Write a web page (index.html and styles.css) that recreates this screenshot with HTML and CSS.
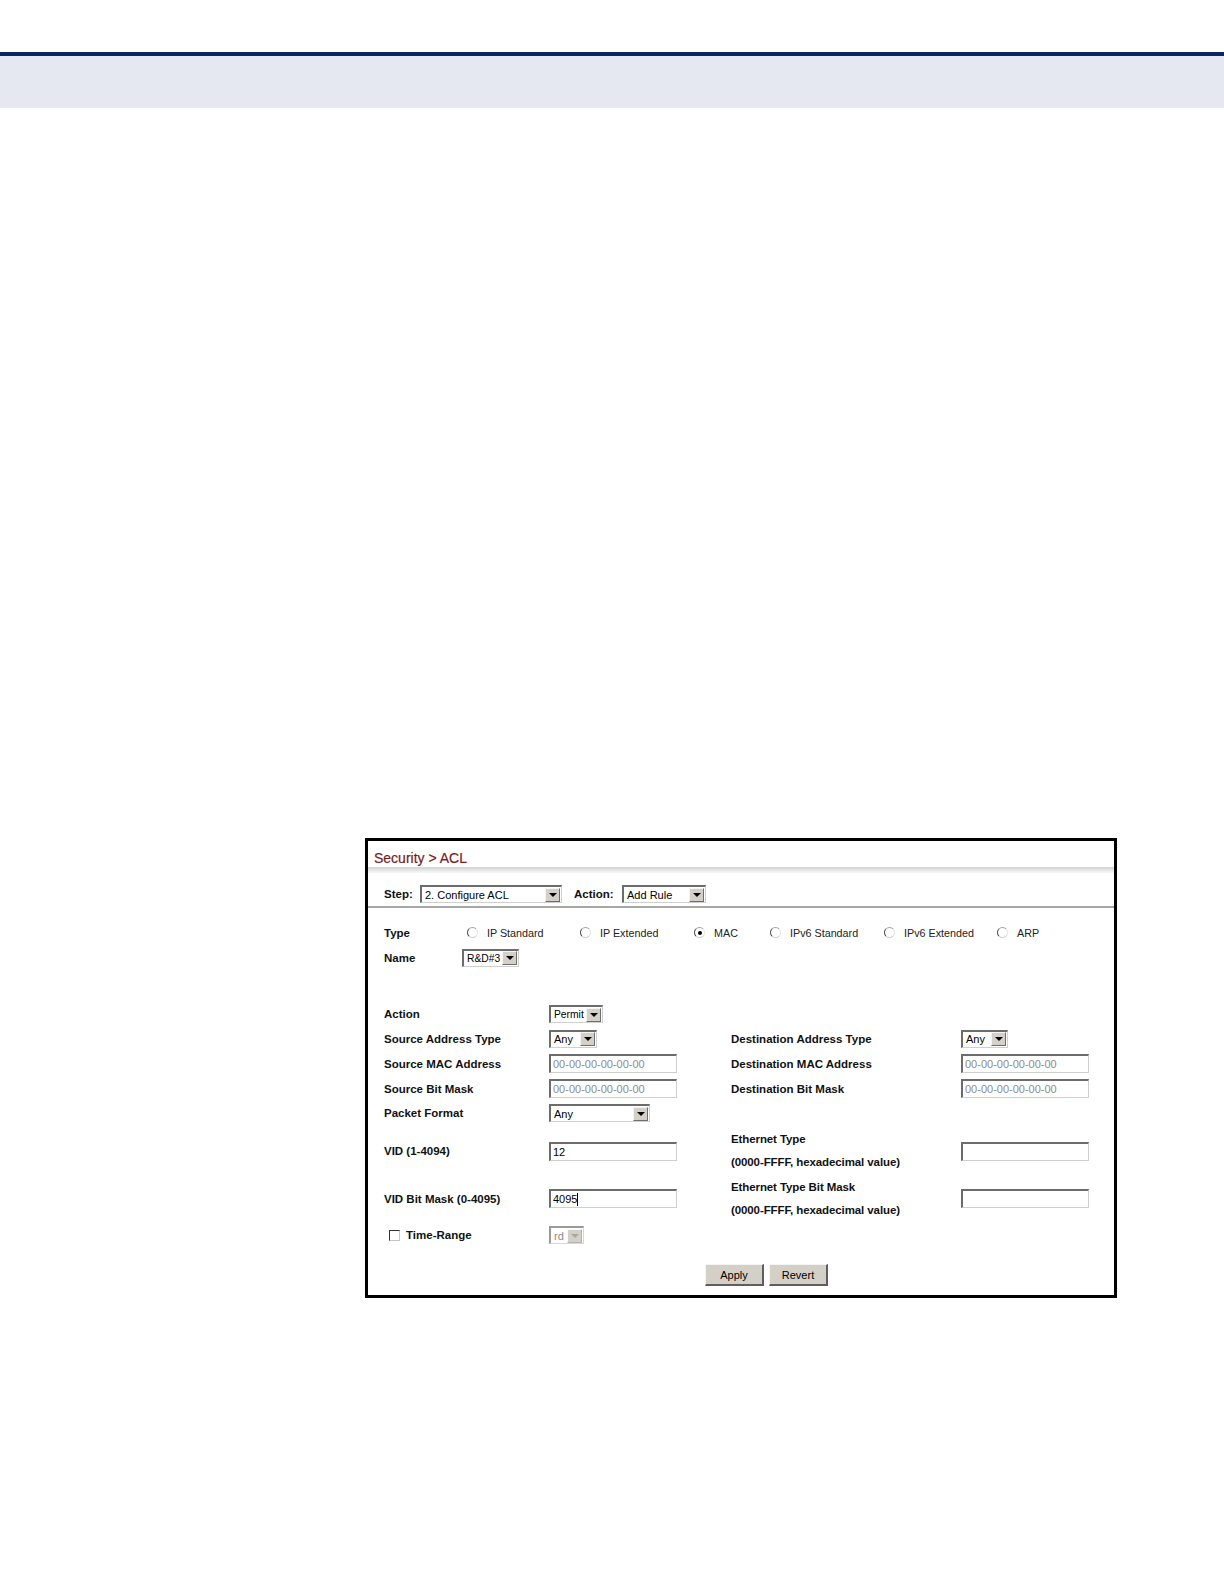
FILE: index.html
```html
<!DOCTYPE html>
<html lang="en">
<head>
<meta charset="utf-8">
<title>Security &gt; ACL</title>
<link rel="stylesheet" href="styles.css">
</head>
<body>
<header class="page-head">
  <div class="rule"></div>
  <div class="band"></div>
</header>
<main class="page">
  <section class="panel">
    <div class="panel-title">Security &gt; ACL</div>
    <div class="title-shade"></div>
    <div class="stepbar">
      <span class="lbl step-lbl">Step:</span>
      <span class="sel w-step"><span class="sel-val">2. Configure ACL</span><span class="sel-btn"></span></span>
      <span class="lbl act-lbl">Action:</span>
      <span class="sel w-act"><span class="sel-val">Add Rule</span><span class="sel-btn"></span></span>
    </div>
    <div class="typebox">
      <div class="trow">
        <span class="lbl type-lbl">Type</span>
        <span class="opt w113"><span class="radio"></span>IP Standard</span>
        <span class="opt w114"><span class="radio"></span>IP Extended</span>
        <span class="opt w76"><span class="radio checked"></span>MAC</span>
        <span class="opt w114"><span class="radio"></span>IPv6 Standard</span>
        <span class="opt w113"><span class="radio"></span>IPv6 Extended</span>
        <span class="opt"><span class="radio"></span>ARP</span>
      </div>
      <div class="trow">
        <span class="lbl type-lbl">Name</span>
        <span class="sel w-name narrow"><span class="sel-val">R&amp;D#3</span><span class="sel-btn"></span></span>
      </div>
    </div>
    <div class="form">
      <div class="lbl">Action</div>
      <div class="ctl"><span class="sel w-permit narrow"><span class="sel-val">Permit</span><span class="sel-btn"></span></span></div>
      <div></div>
      <div></div>

      <div class="lbl">Source Address Type</div>
      <div class="ctl"><span class="sel w-any"><span class="sel-val">Any</span><span class="sel-btn"></span></span></div>
      <div class="lbl">Destination Address Type</div>
      <div class="ctl"><span class="sel w-dany"><span class="sel-val">Any</span><span class="sel-btn"></span></span></div>

      <div class="lbl">Source MAC Address</div>
      <div class="ctl"><span class="inp ph">00-00-00-00-00-00</span></div>
      <div class="lbl">Destination MAC Address</div>
      <div class="ctl"><span class="inp ph">00-00-00-00-00-00</span></div>

      <div class="lbl">Source Bit Mask</div>
      <div class="ctl"><span class="inp ph">00-00-00-00-00-00</span></div>
      <div class="lbl">Destination Bit Mask</div>
      <div class="ctl"><span class="inp ph">00-00-00-00-00-00</span></div>

      <div class="lbl">Packet Format</div>
      <div class="ctl"><span class="sel w-pf"><span class="sel-val">Any</span><span class="sel-btn"></span></span></div>
      <div></div>
      <div></div>

      <div class="lbl">VID (1-4094)</div>
      <div class="ctl"><span class="inp">12</span></div>
      <div class="lbl two"><span>Ethernet Type</span><span>(0000-FFFF, hexadecimal value)</span></div>
      <div class="ctl"><span class="inp"></span></div>

      <div class="lbl">VID Bit Mask (0-4095)</div>
      <div class="ctl"><span class="inp">4095<span class="caret"></span></span></div>
      <div class="lbl two"><span>Ethernet Type Bit Mask</span><span>(0000-FFFF, hexadecimal value)</span></div>
      <div class="ctl"><span class="inp"></span></div>

      <div class="lbl tr"><span class="check"></span>Time-Range</div>
      <div class="ctl"><span class="sel w-rd disabled"><span class="sel-val">rd</span><span class="sel-btn"></span></span></div>
      <div></div>
      <div></div>
    </div>
    <div class="actions">
      <button class="btn" type="button">Apply</button>
      <button class="btn" type="button">Revert</button>
    </div>
  </section>
</main>
</body>
</html>
```
FILE: styles.css
```css
* { box-sizing: border-box; }

body {
  margin: 0;
  background: #fff;
  color: #000;
  font-family: "Liberation Sans", Arial, sans-serif;
}

.rule { margin-top: 52px; height: 4px; background: #0c2462; }
.band { height: 52px; background: #e5e8f1; }

.page { padding: 730px 0 0 365px; }

.panel {
  width: 752px;
  height: 460px;
  border: 3px solid #000;
  background: #fff;
}

.panel-title {
  padding: 8px 0 0 6px;
  line-height: 18px;
  font-size: 14px;
  color: #781c1e;
  -webkit-text-stroke: 0.2px #781c1e;
}

.title-shade {
  height: 6px;
  background: linear-gradient(#d2d2d2, #f7f7f7);
}

.stepbar {
  height: 35px;
  padding: 9px 0 0 16px;
  display: flex;
  align-items: center;
  border-bottom: 2px solid #a6a6a6;
}

.lbl {
  font-size: 11.5px;
  font-weight: bold;
  color: #111;
  white-space: nowrap;
}

.step-lbl { width: 36px; }
.act-lbl { margin-left: 12px; width: 48px; }

/* select boxes */
.sel {
  display: inline-flex;
  align-items: center;
  height: 18px;
  border-style: solid;
  border-width: 2px 1px 1px 2px;
  border-color: #6c6c6c #cfcfcf #cfcfcf #6c6c6c;
  background: #fff;
  font-size: 11px;
}
.sel.narrow { font-size: 10.3px; }
.sel-val {
  flex: 1;
  padding-left: 3px;
  white-space: nowrap;
  overflow: hidden;
}
.sel-btn {
  position: relative;
  flex: none;
  width: 15px;
  height: 14px;
  margin-right: 1px;
  background: #d4d0c8;
  border-style: solid;
  border-width: 1px;
  border-color: #f4f4f4 #6f6f6f #6f6f6f #f4f4f4;
  display: flex;
  align-items: center;
  justify-content: center;
}
.sel-btn::after {
  content: "";
  border-left: 4px solid transparent;
  border-right: 4px solid transparent;
  border-top: 4px solid #000;
}
.sel.disabled { border-color: #9a9a9a #d8d8d8 #d8d8d8 #9a9a9a; }
.sel.disabled .sel-val { color: #8a8a8a; }
.sel.disabled .sel-btn::after { border-top-color: #a8a8a8; }
.sel.disabled .sel-btn { border-color: #fafafa #b4b4b4 #b4b4b4 #fafafa; }

.w-step { width: 142px; }
.w-act { width: 84px; }
.w-name { width: 57px; }
.w-permit { width: 54px; }
.w-any { width: 48px; }
.w-dany { width: 47px; }
.w-pf { width: 101px; }
.w-rd { width: 35px; }

/* type / name */
.typebox { padding: 12px 0 0 16px; }
.trow {
  height: 25px;
  display: flex;
  align-items: center;
}
.type-lbl { width: 78px; }
.opt {
  display: inline-flex;
  align-items: center;
  padding-left: 4px;
  font-size: 10.75px;
  color: #222;
  white-space: nowrap;
}
.w113 { width: 113px; }
.w114 { width: 114px; }
.w76 { width: 76px; }

.radio {
  position: relative;
  width: 11px;
  height: 11px;
  margin: 0 9px 0 1px;
  border-radius: 50%;
  border: 1px solid;
  border-color: #a0a0a0 #e4e4e4 #d0d0d0 #4a4a4a;
  background: #fff;
}
.radio.checked::after {
  content: "";
  position: absolute;
  left: 2.5px;
  top: 2.5px;
  width: 4px;
  height: 4px;
  border-radius: 50%;
  background: #000;
}

/* main form grid */
.form {
  margin-top: 32px;
  padding-left: 16px;
  display: grid;
  grid-template-columns: 165px 182px 230px 1fr;
  grid-template-rows: 24px 25px 25px 25px 24px 52px 43px 30px;
  align-items: center;
}
.ctl { display: flex; align-items: center; }
.lbl.two {
  display: flex;
  flex-direction: column;
  line-height: 23px;
  letter-spacing: -0.1px;
}

.inp {
  display: inline-flex;
  align-items: center;
  width: 128px;
  height: 19px;
  padding-left: 2px;
  border-style: solid;
  border-width: 2px 1px 1px 2px;
  border-color: #6c6c6c #cfcfcf #cfcfcf #6c6c6c;
  background: #fff;
  font-size: 11px;
  color: #000;
}
.inp.ph { color: #8c8c8c; }
.caret {
  display: inline-block;
  width: 1px;
  height: 13px;
  background: #000;
}

.lbl.tr {
  display: flex;
  align-items: center;
  padding-left: 5px;
}
.check {
  width: 11px;
  height: 11px;
  margin-right: 6px;
  border: 1px solid;
  border-color: #333 #c6c6c6 #c6c6c6 #333;
  background: #fff;
}

.actions {
  margin-top: 14px;
  padding-left: 337px;
  display: flex;
  gap: 5px;
}
.btn {
  width: 59px;
  height: 22px;
  padding: 0;
  background: #d4d0c8;
  border-style: solid;
  border-width: 1px 2px 2px 1px;
  border-color: #f4f4f4 #5e5e5e #5e5e5e #f4f4f4;
  font-family: "Liberation Sans", Arial, sans-serif;
  font-size: 11px;
  color: #000;
}
```
